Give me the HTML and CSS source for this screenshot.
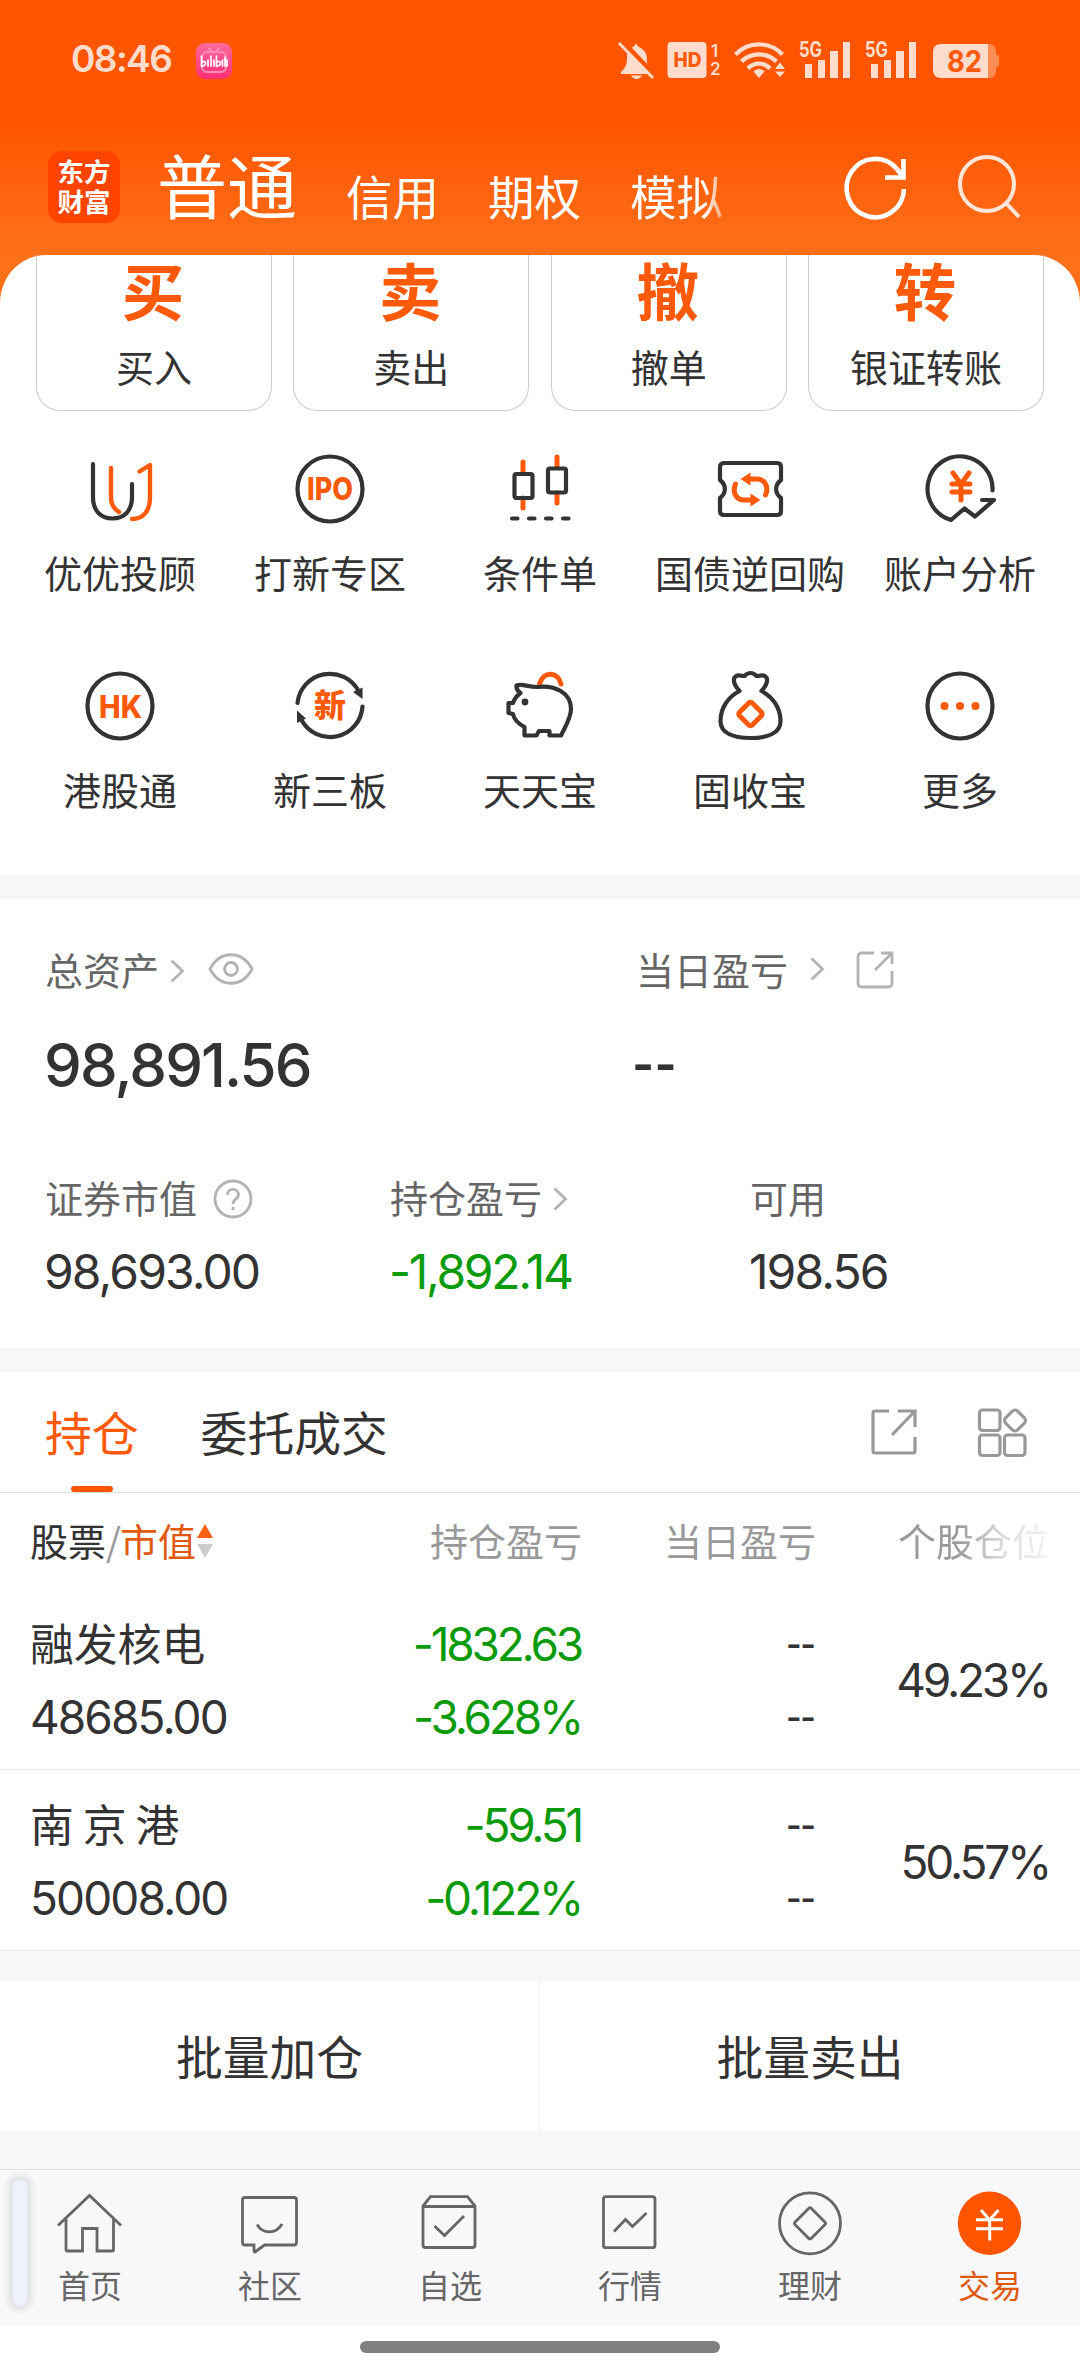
FILE: index.html
```html
<!DOCTYPE html>
<html lang="zh-CN">
<head>
<meta charset="utf-8">
<title>交易</title>
<link rel="stylesheet" href="styles.css">
</head>
<body>
<header class="top">
  <div class="status">
    <span class="clock">08:46</span>
    <svg class="bili" width="36" height="36" viewBox="0 0 36 36"><defs><linearGradient id="bg" x2="0" y2="1"><stop offset="0" stop-color="#ff6a9c"/><stop offset="1" stop-color="#ff2f74"/></linearGradient></defs><rect width="36" height="36" rx="9" fill="url(#bg)"/><g fill="none" stroke="#ff8fb4" stroke-width="2" stroke-linecap="round"><rect x="6" y="9" width="24" height="20" rx="5"/><path d="M13 5.500l3 3M23 5.500l-3 3"/></g><path d="M5.500 13v10M5.500 19c5-2 6 3 0 4.500M12 17v6M15 13v10M18 17v6M20.500 13v10M20.500 19c5-2 6 3 0 4.500M26.500 17v6M29 14v9M31 17v6" fill="none" stroke="#fff" stroke-width="1.700" stroke-linecap="round"/></svg>
    <svg class="sys" width="384" height="40" viewBox="616 40 384 40" fill="#ffdccb">
      <path d="M621 74v-2c5-4 6-9 6-15 0-6 3-9 6-10 2-1 2-3 3-3s1 2 3 3c6 3 8 7 8 13 0 6 1 9 5 13v1z"/><path d="M631 75.500h11c-2 4.500-9 4.500-11 0z"/><path d="M622 41l33 35" stroke="#ff5500" stroke-width="5"/><path d="M619 43l34 35" stroke="#ffdccb" stroke-width="2.800"/>
      <rect x="667.500" y="42" width="39" height="36" rx="4"/><text x="673.500" y="66.500" class="hd" textLength="28" lengthAdjust="spacingAndGlyphs">HD</text><text x="711" y="57" class="tiny">1</text><text x="710" y="75" class="tiny">2</text>
      <g fill="none" stroke="#ffdccb" stroke-width="4.200"><path d="M735.500 54.500c13-13.500 34-13.500 47 0"/><path d="M741.500 61.500c9.500-9.500 25.500-9.500 35 0"/><path d="M748 68.500c6-6.500 16-6.500 22 0"/></g><path d="M759 78l-5.500-6.500c3-3.500 8-3.500 11 0z"/><path d="M780 62.500l5 6.500h-10zM780 77l5-5.500h-10z"/>
      <text x="799" y="57" class="g5" textLength="23" lengthAdjust="spacingAndGlyphs">5G</text><path d="M805 64h7v14h-7zM818 60h7v18h-7zM830 51h8v27h-8zM843 42h7v36h-7z"/>
      <text x="865" y="57" class="g5" textLength="23" lengthAdjust="spacingAndGlyphs">5G</text><path d="M871 64h7v14h-7zM884 60h7v18h-7zM896 51h8v27h-8zM909 42h7v36h-7z"/>
      <path d="M988 44h1c4 0 7 3 7 7v4h2q1 0 1 2v8q0 2-1 2h-2v4c0 4-3 7-7 7h-1z" fill="#ff8c55"/><path d="M941 44h47v34h-47c-5 0-8-3-8-8V52c0-5 3-8 8-8z"/><text x="947" y="72" class="bat" textLength="35" lengthAdjust="spacingAndGlyphs">82</text>
    </svg>
  </div>
  <nav class="accounts">
    <div class="logo"><span>东方</span><span>财富</span></div>
    <b class="current">普通</b>
    <span class="a1">信用</span><span class="a2">期权</span><span class="a3">模拟</span>
    <svg class="refresh" width="68" height="68" viewBox="842 154 68 68" fill="none" stroke="#fff" stroke-width="4.600"><path d="M904 189a28.700 29.200 0 1 1-7-20"/><path d="M897 169l6 8"/><path d="M903.500 159v18.500H885"/></svg>
    <svg class="search" width="68" height="68" viewBox="955 152 68 68" fill="none" stroke="#ffe6d9" stroke-width="4"><circle cx="987" cy="184" r="27"/><path d="M1006 203l13 14"/></svg>
  </nav>
</header>

<main>
<section class="panel">
  <div class="cards">
    <div class="card"><b>买</b><span>买入</span></div>
    <div class="card"><b>卖</b><span>卖出</span></div>
    <div class="card"><b>撤</b><span>撤单</span></div>
    <div class="card"><b>转</b><span>银证转账</span></div>
  </div>
  <div class="tools">
    <div class="tool"><svg viewBox="0 0 70 70"><path d="M8 10V43C8 57 16 64.500 27.500 64.500S47 57 47 43V30"/><path class="o thin" d="M26 14V43C26 51 29 55 34 58M47 65C58 65 65 57 65 44V11L54.500 17.500"/></svg><span>优优投顾</span></div>
    <div class="tool"><svg viewBox="0 0 70 70"><circle cx="35" cy="35" r="32.500"/><text x="12" y="46" textLength="46" lengthAdjust="spacingAndGlyphs">IPO</text></svg><span>打新专区</span></div>
    <div class="tool"><svg viewBox="0 0 70 70"><path class="o" d="M18 8V18M18 44V54M52 3V13M52 39V49"/><rect x="9.500" y="20" width="18" height="24" rx="2"/><rect x="43" y="14.500" width="18" height="24" rx="2"/><path d="M7 64.500h5.500M24 64.500h5.500M41 64.500h5.500M58 64.500h5.500"/></svg><span>条件单</span></div>
    <div class="tool"><svg viewBox="0 0 70 70"><path d="M9 9H62Q66 9 66 13V26C59.500 31 59.500 39 66 44V57Q66 61 62 61H9Q5 61 5 57V44C11.500 39 11.500 31 5 26V13Q5 9 9 9Z"/><g id="turn"><path class="o" d="M50.500 41C54 33 50 25 42 25H34"/><path class="f" d="M25.500 25L35.500 18.500V31.500Z"/></g><use href="#turn" transform="rotate(180 35.500 35.500)"/></svg><span>国债逆回购</span></div>
    <div class="tool"><svg viewBox="0 0 70 70"><path d="M67.500 36.500A32.500 32.500 0 1 0 26 66L39.500 54.500L50 62.500L69 46H57"/><path class="o" d="M28 19L36 30L44 19M36 30V46M27 30H45M27 38H45"/></svg><span>账户分析</span></div>
    <div class="tool"><svg viewBox="0 0 70 70"><circle cx="35" cy="35" r="32.500"/><text x="14" y="46.500" textLength="43" lengthAdjust="spacingAndGlyphs">HK</text></svg><span>港股通</span></div>
    <div class="tool"><svg viewBox="0 0 70 70"><path d="M2.500 32A32.500 32.500 0 0 1 63.500 20M67.500 35.500A32.500 32.500 0 0 1 6.500 49"/><path class="k" d="M58 21L67.500 16.500V28ZM2 52V39.500L11 47.500Z"/><text class="cjk" x="19" y="46">新</text></svg><span>新三板</span></div>
    <div class="tool"><svg viewBox="0 0 70 70"><path class="o" d="M34.500 13C38 0 53 0 56 13"/><path d="M15.500 22Q11 19 11.500 14.500C17 12 22 16 32 16C50 13.500 66 22 66 38C66 47 60 56 56 64.500H44.500V60H34L31.500 64.500H19.500V56C14 53 9 49 8 43L3.500 42V32H8Q10 26 15.500 22Z"/><circle class="k" cx="20" cy="31" r="3.400"/></svg><span>天天宝</span></div>
    <div class="tool"><svg viewBox="0 0 70 70"><path d="M24.500 20C13 26 5.500 37 5.500 50C5.500 62 18 67 35.500 67S65.500 62 65.500 50C65.500 37 58 26 46.500 20C55 11 53 3.500 46 4.500Q44 5 41.500 5C38 1 33 1 29.500 5Q27 5 25 4.500C18 3.500 16 11 24.500 20Z"/><rect class="o" x="26.500" y="34" width="18" height="18" rx="2.500" transform="rotate(45 35.500 43)"/></svg><span>固收宝</span></div>
    <div class="tool"><svg viewBox="0 0 70 70"><circle cx="35" cy="35" r="32.500"/><g class="f"><circle cx="19.500" cy="35" r="4"/><circle cx="35" cy="35" r="4"/><circle cx="50.500" cy="35" r="4"/></g></svg><span>更多</span></div>
  </div>
</section>

<section class="assets">
  <div class="major">
    <div>
      <p class="lbl">总资产<svg class="ch" viewBox="0 0 14 24"><path d="M1.500 1.500L12.500 12L1.500 22.500"/></svg><svg class="eye" viewBox="0 0 46 32"><path d="M2 16C12-3 34-3 44 16C34 35 12 35 2 16Z"/><circle cx="23" cy="16" r="6.500"/></svg></p>
      <p class="big">98,891.56</p>
    </div>
    <div>
      <p class="lbl">当日盈亏<svg class="ch wide" viewBox="0 0 14 24"><path d="M1.500 1.500L12.500 12L1.500 22.500"/></svg><svg class="out" viewBox="0 0 40 40"><path d="M19 3H7Q3 3 3 7V33Q3 37 7 37H33Q37 37 37 33V21M26 3H37V14M37 3L20 20"/></svg></p>
      <p class="big dash">--</p>
    </div>
  </div>
  <div class="minor">
    <div><p class="lbl">证券市值<svg class="help" viewBox="0 0 40 40"><circle cx="20" cy="20" r="18"/><path d="M14.500 16C14.500 8.500 25.500 8.500 25.500 16C25.500 20 20 20 20 25M20 28V31"/></svg></p><p class="num">98,693.00</p></div>
    <div><p class="lbl">持仓盈亏<svg class="ch" viewBox="0 0 14 24"><path d="M1.500 1.500L12.500 12L1.500 22.500"/></svg></p><p class="num green tight">-1,892.14</p></div>
    <div><p class="lbl">可用</p><p class="num">198.56</p></div>
  </div>
</section>

<section class="holdings">
  <div class="tabs">
    <span class="tab on">持仓</span><span class="tab">委托成交</span>
    <svg class="share" viewBox="0 0 50 50"><path d="M20 4H6Q4 4 4 6V44Q4 46 6 46H44Q46 46 46 44V30M29 4H46V20M46 4L23 28"/></svg>
    <svg class="apps" viewBox="0 0 50 50"><rect x="2.500" y="3" width="20.500" height="20.500" rx="3"/><rect x="2.500" y="28" width="20.500" height="20.500" rx="3"/><rect x="27.500" y="28" width="20.500" height="20.500" rx="3"/><rect x="29.500" y="5" width="17" height="17" rx="4" transform="rotate(45 38 13.500)"/></svg>
  </div>
  <div class="row head"><div class="c1">股票<i>/</i><em>市值</em><svg class="sort" viewBox="0 0 16 34"><path d="M8 0L16 14H0Z" fill="#f9600f"/><path d="M0 20H16L8 34Z" fill="#ccc"/></svg></div><div>持仓盈亏</div><div>当日盈亏</div><div class="fade">个股仓位</div></div>
  <div class="row stock"><div class="c1"><p class="name">融发核电</p><p>48685.00</p></div><div class="green"><p>-1832.63</p><p>-3.628%</p></div><div class="none"><p>--</p><p>--</p></div><div class="share-pct">49.23%</div></div>
  <div class="row stock"><div class="c1"><p class="name spaced">南京港</p><p>50008.00</p></div><div class="green"><p>-59.51</p><p>-0.122%</p></div><div class="none"><p>--</p><p>--</p></div><div class="share-pct">50.57%</div></div>
</section>

<div class="batch"><span>批量加仓</span><span>批量卖出</span></div>
</main>

<footer class="nav">
  <div class="item"><svg viewBox="0 0 70 66"><path d="M3 35.500L34.500 5.500L66 35.500M11 29V59.500Q11 61 12.500 61H27.500V38.500H42V61H57Q58.500 61 58.500 59.500V29"/></svg><span>首页</span></div>
  <div class="item"><svg viewBox="0 0 70 66"><path d="M10 7.500H59Q61.500 7.500 61.500 10V52.500Q61.500 55 59 55H29.500L20 62Q19 62 19 61V55H10Q7.500 55 7.500 52.500V10Q7.500 7.500 10 7.500ZM22 34.500C28 44.500 41 44.500 47 34"/></svg><span>社区</span></div>
  <div class="item"><svg viewBox="0 0 70 66"><path d="M8 16L15.500 6.700H52.500L60 16V55Q60 57.500 57.500 57.500H10.500Q8 57.500 8 55ZM8 16.500H60M19.500 36L29.500 45.500L49 26"/></svg><span>自选</span></div>
  <div class="item"><svg viewBox="0 0 70 66"><rect x="8.500" y="6.700" width="51.500" height="51" rx="2.500"/><path d="M19 41.500L30.500 29.500L37.500 36.500L51.500 23"/></svg><span>行情</span></div>
  <div class="item"><svg viewBox="0 0 70 66"><circle cx="35" cy="33.300" r="30.500"/><rect x="23.500" y="21.800" width="23" height="23" rx="2" transform="rotate(45 35 33.300)"/></svg><span>理财</span></div>
  <div class="item on"><svg viewBox="0 0 70 66"><circle class="disc" cx="34.500" cy="33.300" r="31.700"/><path class="yen" d="M26 20L34.700 30L43.500 20M34.700 30V50.500M21 29.700H48M21 38.700H48"/></svg><span>交易</span></div>
  <i class="handle"></i>
</footer>
<div class="home"><i></i></div>
</body>
</html>
```
FILE: styles.css
```css
* { box-sizing: border-box; margin: 0; padding: 0; }
body { width: 1080px; height: 2374px; overflow: hidden; background: #fff; color: #333; font: 38px/40px "Noto Sans CJK SC", "Noto Sans", sans-serif; }
i, em { font-style: normal; }
svg { display: block; flex: none; overflow: visible; }

/* orange header */
.top { height: 310px; background: linear-gradient(#ff5500 0 125px, #ff6b16 230px, #ff7019 260px); }
.status { height: 120px; padding-left: 71px; display: flex; align-items: flex-start; }
.clock { width: 125px; margin-top: 38px; font: 600 37px/42px Inter, sans-serif; letter-spacing: -1.600px; color: #ffdccb; }
.bili { margin-top: 43px; }
.sys { margin: 40px 0 0 384px; }
.hd { font: 800 20px Inter, sans-serif; fill: #ff5a0a; }
.tiny { font: 600 17px Inter, sans-serif; }
.g5 { font: 700 21px Inter, sans-serif; }
.bat { font: 700 30px Inter, sans-serif; fill: #ff5a0a; }
.accounts { height: 135px; padding-left: 48px; display: flex; align-items: flex-start; color: #fff; font-size: 46.500px; line-height: 50px; }
.accounts > span { margin-top: 50px; width: 142px; white-space: nowrap; }
.logo { width: 72px; height: 72px; margin: 31px 37px 0 0; padding-top: 5px; border-radius: 14px; background: #ff4400; display: flex; flex-direction: column; align-items: center; font-size: 26.500px; font-weight: 700; line-height: 30px; }
.current { width: 189px; margin-top: 29px; font-size: 70px; font-weight: 400; line-height: 70px; }
.accounts > .a3 { width: 94px; background: linear-gradient(90deg, #fff 78%, #ff9c66 102%); background-clip: text; -webkit-background-clip: text; color: transparent; }
.refresh { margin: 34px 0 0 118px; }
.search { margin: 32px 0 0 45px; }

/* shortcuts */
.panel { height: 620px; margin-top: -55px; border-radius: 46px 46px 0 0 / 48px 48px 0 0; background: #fff; }
.cards { height: 156px; padding: 0 36px; display: grid; grid-template-columns: repeat(4, 236px); justify-content: space-between; }
.card { border: 1px solid #ccc; border-top: 0; border-radius: 0 0 24px 24px; display: flex; flex-direction: column; align-items: center; }
.card b { margin-top: 2px; margin-right: 2px; font-size: 62.500px; line-height: 64px; font-weight: 700; color: #ff5a0a; }
.card span { margin-top: 25px; }
.tools { padding: 43px 15px 0; display: grid; grid-template-columns: repeat(5, 210px); grid-auto-rows: 217px; }
.tool { display: flex; flex-direction: column; align-items: center; gap: 28px; white-space: nowrap; }
.tool svg { width: 70px; height: 70px; fill: none; stroke: #333; stroke-width: 4.200; stroke-linecap: round; stroke-linejoin: round; }
.tool .o { stroke: #ff5a0a; stroke-width: 5; }
.tool .thin { stroke-width: 4.400; }
.tool .f { fill: #ff5a0a; stroke: none; }
.tool .k { fill: #333; stroke: none; }
.tool text { fill: #ff5a0a; stroke: none; font: 800 31px Inter, sans-serif; }
.tool .cjk { font: 900 32px "Noto Sans CJK SC", sans-serif; }

/* balances */
.assets { height: 497px; padding: 49px 45px 0; border: solid #f7f7fa; border-width: 24px 0; }
.major { display: grid; grid-template-columns: 591px 1fr; height: 229px; padding-top: 1px; }
.lbl { display: flex; align-items: center; height: 40px; color: #666; white-space: nowrap; }
.lbl svg { fill: none; stroke: #b3b3b3; stroke-width: 2.800; }
.ch { width: 14px; height: 24px; margin: 3px 0 0 11px; }
.ch.wide { margin: 0 0 0 22px; }
.eye { width: 46px; height: 32px; margin-left: 24px; }
.out { width: 40px; height: 40px; margin: 2px 0 0 31px; }
.help { width: 40px; height: 40px; margin: 3px 0 0 16px; }
.big { margin: 44px 0 0 -1px; font: 500 60px/64px Inter, sans-serif; letter-spacing: -1.900px; }
.dash { margin-left: -3px; font-family: Roboto, sans-serif; letter-spacing: 2px; }
.minor { display: grid; grid-template-columns: 345px 360px 1fr; }
.num { margin: 30px 0 0 -1px; font: 400 48px/50px Inter, sans-serif; letter-spacing: -1.900px; }
.tight { letter-spacing: -2.300px; }
.green { color: #0a9a0a; }

/* positions */
.tabs { height: 121px; padding: 0 53px 0 45px; border-bottom: 1px solid #ddd; display: flex; align-items: flex-start; font-size: 46.800px; line-height: 50px; }
.tab { height: 120px; padding-top: 34px; margin-right: 62px; display: flex; flex-direction: column; align-items: center; }
.tab.on { color: #ff5a0a; }
.tab.on::after { content: ""; width: 42px; height: 6px; margin-top: 30px; border-radius: 3px; background: #ff5500; }
.tabs svg { width: 50px; height: 50px; margin-top: 35px; fill: none; stroke: #999; stroke-width: 3.200; }
.share { margin-left: auto; }
.apps { margin-left: 58px; }
.row { display: grid; grid-template-columns: 240px 312px 234px 234px; padding-left: 30px; align-items: center; text-align: right; white-space: nowrap; }
.c1 { text-align: left; }
.head { height: 95px; color: #999; }
.head > div { margin-top: -1px; }
.head .c1 { display: flex; align-items: center; color: #333; }
.head i { width: 14px; text-align: center; color: #999; }
.head em { color: #e0590f; }
.sort { width: 16px; height: 34px; margin: 2px 0 0 1px; }
.fade { background: linear-gradient(90deg, #999 60%, #ddd 80%, #f4f4f4); background-clip: text; -webkit-background-clip: text; color: transparent; }
.stock { height: 181px; border-bottom: 1px solid #ebebeb; font: 400 46px/73px Inter, sans-serif; letter-spacing: -1.900px; padding-top: 4px; }
.stock .green { padding-right: 1px; letter-spacing: -3.200px; }
.stock .none { font-family: Roboto, sans-serif; letter-spacing: 1.500px; }
.stock .share-pct { padding-right: 1px; letter-spacing: -3.200px; }
.head + .stock { height: 182px; }
.name { font: 43.800px/69px "Noto Sans CJK SC", sans-serif; letter-spacing: 0; margin-bottom: 4px; }
.spaced { letter-spacing: 9px; }
.batch { height: 218px; border: solid #f6f7f9; border-width: 30px 0 38px; display: grid; grid-template-columns: 539px 541px; font-size: 46.800px; line-height: 148px; text-align: center; }
.batch span + span { border-left: 1px solid #eee; }

/* bottom bar */
.nav { position: relative; height: 157px; padding-top: 20px; background: #f8f8fb; border-top: 1px solid #e3e3e5; display: grid; grid-template-columns: repeat(6, 180px); font-size: 32px; line-height: 36px; color: #666; }
.item { display: flex; flex-direction: column; align-items: center; gap: 10px; }
.item svg { width: 70px; height: 66px; fill: none; stroke: #666; stroke-width: 2.800; }
.item.on { color: #e0590f; }
.item .disc { fill: #ff5500; stroke: none; }
.item .yen { stroke: #fff; stroke-width: 3; }
.handle { position: absolute; left: 9px; top: 6px; width: 22px; height: 134px; border: 4px solid #e6e7ea; border-radius: 11px; background: #eef2fc; box-shadow: 0 0 0 4px #f1f1f3; }
.home { height: 48px; padding-top: 15px; background: #fff; }
.home i { display: block; width: 360px; height: 12px; margin: 0 auto; border-radius: 6px; background: #808080; }
```
